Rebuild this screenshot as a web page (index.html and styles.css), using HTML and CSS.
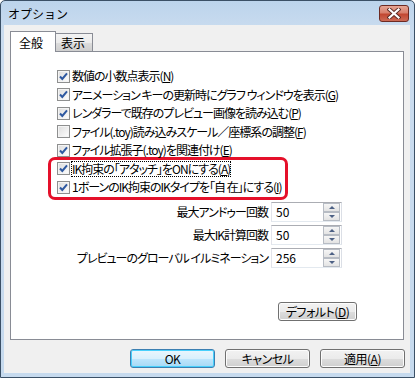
FILE: index.html
```html
<!DOCTYPE html>
<html lang="ja">
<head>
  <meta charset="UTF-8">
  <title>オプション</title>
  <link rel="stylesheet" href="styles.css">
</head>
<body>

  <div class="window">
    <!-- Title bar -->
    <div class="titlebar">
      <span class="title">オプション</span>
      <span class="close">
        <svg width="14" height="11" viewBox="0 0 14 11">
          <path d="M2.5 1.5 L11.5 9.5 M11.5 1.5 L2.5 9.5" stroke="#5a2a24" stroke-width="4" stroke-linecap="square"/>
          <path d="M2.5 1.5 L11.5 9.5 M11.5 1.5 L2.5 9.5" stroke="#fff" stroke-width="2.2" stroke-linecap="square"/>
        </svg>
      </span>
    </div>

    <div class="client">
      <!-- Tabs -->
      <div class="tabs">
        <span class="tab active">全般</span>
        <span class="tab">表示</span>
      </div>

      <div class="panel">
        <!-- Checkbox options -->
        <div class="checks">
          <div class="check-row"><span class="cb on"></span><span class="lbl">数値の小数点表示(<u>N</u>)</span></div>
          <div class="check-row"><span class="cb on"></span><span class="lbl">アニメーション キーの更新時にグラフ ウィンドウを表示(<u>G</u>)</span></div>
          <div class="check-row"><span class="cb on"></span><span class="lbl">レンダラーで既存のプレビュー画像を読み込む(<u>P</u>)</span></div>
          <div class="check-row"><span class="cb"></span><span class="lbl">ファイル(.toy)読み込みスケール／座標系の調整(<u>F</u>)</span></div>
          <div class="check-row"><span class="cb on"></span><span class="lbl">ファイル拡張子(.toy)を関連付け(<u>E</u>)</span></div>
          <div class="highlight">
            <div class="check-row"><span class="cb on"></span><span class="lbl focus">IK拘束の「アタッチ」をONにする(<u>A</u>)</span></div>
            <div class="check-row"><span class="cb on"></span><span class="lbl">1ボーンのIK拘束のIKタイプを「自 在」にする(<u>I</u>)</span></div>
          </div>
        </div>

        <!-- Numeric fields -->
        <div class="spins">
          <span class="spin-label">最大アンドゥー回数</span>
          <div class="spin"><span class="spin-val">50</span><span class="spin-btns"><span class="sb up"></span><span class="sb down"></span></span></div>
          <span class="spin-label">最大IK計算回数</span>
          <div class="spin"><span class="spin-val">50</span><span class="spin-btns"><span class="sb up"></span><span class="sb down"></span></span></div>
          <span class="spin-label">プレビューのグローバル イルミネーション</span>
          <div class="spin"><span class="spin-val">256</span><span class="spin-btns"><span class="sb up"></span><span class="sb down"></span></span></div>
        </div>

        <div class="default-row">
          <button class="btn default-btn">デフォルト(<u>D</u>)</button>
        </div>
      </div>

      <!-- Dialog buttons -->
      <div class="buttons">
        <button class="btn ok">OK</button>
        <button class="btn">キャンセル</button>
        <button class="btn">適用(<u>A</u>)</button>
      </div>
    </div>
  </div>

</body>
</html>
```

FILE: styles.css
```css
/* Basic styling */
body {
  margin: 0;
  font-family: "Noto Sans CJK JP", "Liberation Sans", sans-serif;
  font-size: 12px;
  color: #000;
  background: #fff;
}
u {
  text-decoration-thickness: 1px;
  text-underline-offset: 1px;
}

/* Window frame */
.window {
  width: 415px;
  height: 378px;
  box-sizing: border-box;
  border: 1px solid #3b5066;
  border-radius: 5px 5px 0 0;
  background: linear-gradient(#bcd4ec, #cadcef 30px, #c6daee);
  padding: 0 4px 4px 3px;
  display: flex;
  flex-direction: column;
}
.titlebar {
  height: 24px;
  display: flex;
  align-items: center;
  justify-content: space-between;
}
.title {
  padding-left: 4px;
  line-height: 14px;
  margin-top: 2px;
}
.close {
  width: 30px;
  height: 17px;
  box-sizing: border-box;
  margin-right: 1px;
  margin-top: 1px;
  border: 1px solid #6d2a22;
  border-radius: 3px;
  background: linear-gradient(#e6a595, #d8806d 45%, #c24731 55%, #cc6a55);
  display: flex;
  align-items: center;
  justify-content: center;
}

/* Client area */
.client {
  flex: 1;
  background: #f0f0f0;
  padding: 6px 6px 0 6px;
  display: flex;
  flex-direction: column;
}

/* Tabs */
.tabs {
  height: 20px;
  display: flex;
  align-items: flex-end;
}
.tab {
  height: 18px;
  width: 38px;
  box-sizing: border-box;
  border: 1px solid #898c95;
  border-bottom: none;
  background: linear-gradient(#f3f3f3, #ebebeb 50%, #dddddd 51%, #cfcfcf);
  padding-left: 5px;
  line-height: 17px;
  margin-left: -1px;
}
.tab.active {
  height: 21px;
  width: 46px;
  margin-left: 0;
  margin-bottom: -1px;
  background: #fff;
  padding-left: 8px;
  line-height: 21px;
  position: relative;
  z-index: 1;
}

/* Panel */
.panel {
  height: 289px;
  box-sizing: border-box;
  border: 1px solid #898c95;
  background: #fff;
  display: flex;
  flex-direction: column;
}
.checks {
  padding: 15px 0 0 46px;
}
.check-row {
  height: 18.5px;
  display: flex;
  align-items: center;
  font-feature-settings: "palt";
  letter-spacing: -1px;
  white-space: nowrap;
}
.lbl {
  margin-left: 2px;
  line-height: 14px;
}
.lbl.focus {
  outline: 1px dotted #000;
  outline-offset: 0;
}
.cb {
  width: 13px;
  height: 13px;
  box-sizing: border-box;
  border: 1px solid #8e8f8f;
  background: linear-gradient(135deg, #dcdcdc, #f4f4f4 70%, #fff);
  box-shadow: inset 0 0 0 1px #f4f4f4;
  flex: none;
}
.cb.on {
  background-image:
    url("data:image/svg+xml;utf8,<svg xmlns='http://www.w3.org/2000/svg' width='11' height='11' viewBox='0 0 11 11'><path d='M2 5.5 L4.3 8 L9 2.3' fill='none' stroke='%232e58a0' stroke-width='2'/></svg>"),
    linear-gradient(135deg, #dcdcdc, #f4f4f4 70%, #fff);
  background-repeat: no-repeat;
  background-position: center;
}
.highlight {
  width: 240px;
  box-sizing: border-box;
  border: 3px solid #e5102a;
  border-radius: 7px;
  margin: -3px 0 -4px -9px;
  padding-left: 6px;
}

/* Spin fields */
.spins {
  display: grid;
  grid-template-columns: auto 71px;
  column-gap: 3px;
  row-gap: 3px;
  justify-content: end;
  align-items: center;
  margin: 6px 61px 0 0;
  font-feature-settings: "palt";
}
.spin-label {
  text-align: right;
  white-space: nowrap;
  letter-spacing: -1px;
}
.spin {
  height: 20px;
  box-sizing: border-box;
  border: 1px solid;
  border-color: #abadb3 #dbdfe6 #e3e9ef #e2e3ea;
  background: #fff;
  display: flex;
}
.spin-val {
  flex: 1;
  padding-left: 4px;
  line-height: 18px;
}
.spin-btns {
  width: 17px;
  margin-right: 1px;
  display: flex;
  flex-direction: column;
}
.sb {
  flex: 1;
  box-sizing: border-box;
  border: 1px solid #b7bcc4;
  background: linear-gradient(#f6f6f6, #e3e3e3);
  display: flex;
  align-items: center;
  justify-content: center;
}
.sb::after {
  content: "";
  border-left: 3px solid transparent;
  border-right: 3px solid transparent;
}
.sb.up::after { border-bottom: 3px solid #4d6185; }
.sb.down::after { border-top: 3px solid #4d6185; }

/* Buttons */
.btn {
  font-family: inherit;
  font-size: 12px;
  font-feature-settings: "palt";
  letter-spacing: -0.5px;
  height: 19px;
  box-sizing: border-box;
  border: 1px solid #707070;
  border-radius: 3px;
  background: linear-gradient(#f2f2f2, #ebebeb 50%, #dddddd 51%, #cfcfcf);
  box-shadow: inset 0 0 0 1px #fcfcfc;
  padding: 0;
  line-height: 16px;
  color: #000;
}
.default-row {
  margin-top: auto;
  margin-bottom: 18px;
  padding-right: 46px;
  display: flex;
  justify-content: flex-end;
}
.default-btn {
  width: 79px;
}
.buttons {
  margin-top: 9px;
  margin-right: -1px;
  display: flex;
  justify-content: flex-end;
  gap: 10px;
}
.buttons .btn {
  width: 85px;
}
.btn.ok {
  border-color: #3c7fb1;
  background: linear-gradient(#eaf6fd, #d9f0fc 50%, #bee6fd 51%, #a7d9f5);
  box-shadow: inset 0 0 0 1px #48d0fc;
}
```
